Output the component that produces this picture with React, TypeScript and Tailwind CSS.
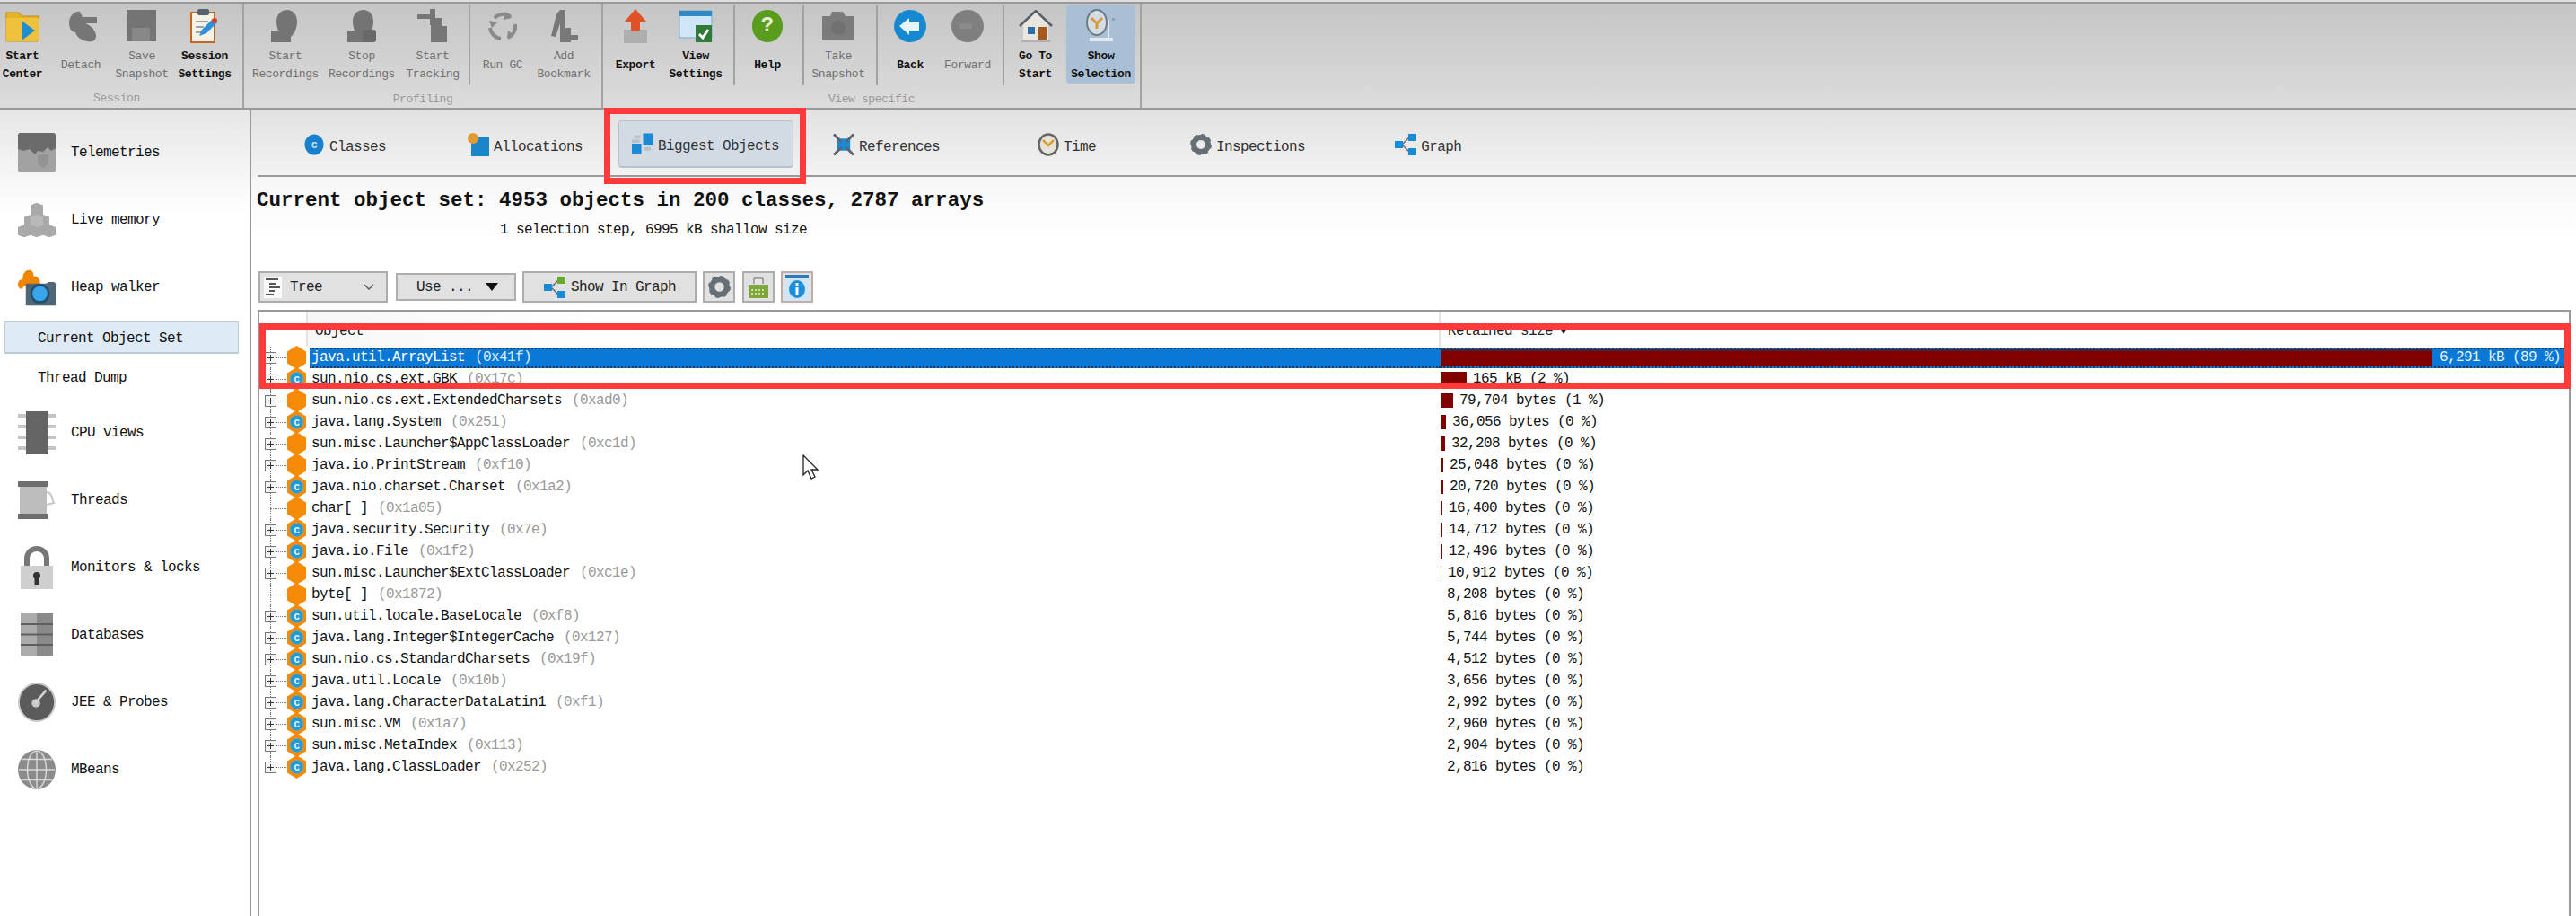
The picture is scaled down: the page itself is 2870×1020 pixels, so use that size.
import { ReactNode } from 'react';

// toolbar icons, 36x36
const StartCenterIcon = () => (
  <svg width="38" height="36" viewBox="0 0 38 36">
    <path d="M1 3h14l3 4h19v28H1z" fill="#e6b422" stroke="#b98d14" />
    <path d="M1 9h36v26H1z" fill="#efc13c" />
    <path d="M18 12l15 11-15 11z" fill="#1d8fd0" />
  </svg>
);
const DetachIcon = () => (
  <svg width="38" height="36" viewBox="0 0 38 36">
    <path d="M6 14C6 6 14 1 18 2l3 6h16v7H24c6 2 12 8 12 14s-5 7-10 6c-6-1-12-5-13-10-4 0-7-4-7-11z" fill="#767676" />
  </svg>
);
const SaveIcon = () => (
  <svg width="36" height="36" viewBox="0 0 36 36">
    <rect x="1" y="0" width="33" height="35" fill="#747474" />
    <rect x="7" y="20" width="20" height="15" fill="#888888" />
  </svg>
);
const SettingsIcon = () => (
  <svg width="32" height="38" viewBox="0 0 32 38">
    <rect x="1" y="4" width="26" height="33" fill="#f4f1e6" stroke="#c8651c" strokeWidth="2" />
    <rect x="8" y="0" width="13" height="7" rx="2" fill="#56636e" />
    <path d="M6 14h14M6 20h9M6 26h7" stroke="#9aa4ad" strokeWidth="2" />
    <path d="M10 30l3-7 12-12 5 4-12 12z" fill="#2f8fd8" />
    <circle cx="27" cy="13" r="3" fill="#d8402c" />
  </svg>
);
const RecordIcon = ({ stop }: { stop?: boolean }) => (
  <svg width="34" height="38" viewBox="0 0 34 38">
    <path d="M7 14C7 5 13 1 19 1s11 5 11 13c0 8-3 13-7 17v6H1V24h8c-1-3-2-6-2-10z" fill="#747474" />
    {stop && <rect x="18" y="23" width="15" height="14" rx="3" fill="#686868" />}
  </svg>
);
const TrackingIcon = () => (
  <svg width="36" height="38" viewBox="0 0 36 38">
    <path d="M1 6h14V0h6v10h8v9h5v18H16V18h-1v-7H1z" fill="#767676" />
  </svg>
);
const GcIcon = () => (
  <svg width="36" height="36" viewBox="0 0 36 36" fill="none" stroke="#8a8a8a" strokeWidth="4">
    <path d="M9 9A13 13 0 0 1 27 8" />
    <path d="M32 16A14 14 0 0 1 24 31" />
    <path d="M16 32A14 14 0 0 1 4 20" />
    <path d="M21 2l7 7-9 2M30 28l-7 4 1-9M3 12l3 8 6-6" fill="#8a8a8a" stroke="none" />
  </svg>
);
const BookmarkIcon = () => (
  <svg width="36" height="38" viewBox="0 0 36 38">
    <path d="M4 30L10 6l4-5h6v20h6v8h8v6h-8v2H14V16l-5 15z" fill="#787878" />
  </svg>
);
const ExportIcon = () => (
  <svg width="30" height="38" viewBox="0 0 30 38">
    <rect x="2" y="23" width="26" height="15" fill="#aeaeae" />
    <path d="M15 0l12 14h-7v10h-10V14H3z" fill="#de5226" />
  </svg>
);
const ViewSettingsIcon = () => (
  <svg width="38" height="36" viewBox="0 0 38 36">
    <rect x="1" y="1" width="36" height="30" fill="#cfe6f6" stroke="#7fa8c8" />
    <rect x="1" y="1" width="36" height="6" fill="#2d8cc8" />
    <rect x="19" y="17" width="18" height="19" fill="#2f7a36" />
    <path d="M23 27l4 4 6-9" stroke="#fff" strokeWidth="3" fill="none" />
  </svg>
);
const HelpIcon = () => (
  <div className="w-[34px] h-[36px] rounded-full bg-[#5a9c1e] flex items-center justify-center text-[#e6f0d0] font-bold text-[24px]">?</div>
);
const CameraIcon = () => (
  <svg width="36" height="32" viewBox="0 0 36 32">
    <path d="M0 5h9l2-5h12l3 5h10v27H0z" fill="#7b7b7b" />
    <circle cx="18" cy="18" r="8" fill="#717171" />
  </svg>
);
const BackIcon = () => (
  <svg width="36" height="36" viewBox="0 0 36 36">
    <ellipse cx="18" cy="18" rx="18" ry="18" fill="#1588d0" />
    <path d="M6 18l11-9v5h11v9H17v5z" fill="#e8f4fb" />
  </svg>
);
const ForwardIcon = () => (
  <svg width="36" height="36" viewBox="0 0 36 36">
    <ellipse cx="18" cy="18" rx="18" ry="18" fill="#7f7f7f" />
    <path d="M9 15h14v6H9z" fill="#8b8b8b" />
  </svg>
);
const HouseIcon = () => (
  <svg width="38" height="36" viewBox="0 0 38 36">
    <path d="M5 15L19 2l14 13v20H5z" fill="#e8e6de" />
    <path d="M1 18L19 1l18 17" fill="none" stroke="#55606a" strokeWidth="2.5" />
    <rect x="22" y="19" width="9" height="16" fill="#a8581c" />
    <rect x="10" y="19" width="8" height="8" fill="#2a6fa8" />
    <rect x="3" y="33" width="32" height="3" fill="#b0b0b0" />
  </svg>
);
const SelectionIcon = () => (
  <svg width="38" height="38" viewBox="0 0 38 38">
    <ellipse cx="14" cy="15" rx="11" ry="14" fill="#d5dde4" stroke="#6f7b84" strokeWidth="2" />
    <path d="M8 10l6 6 6-6M14 16v6" stroke="#d59a3a" strokeWidth="3" fill="none" />
    <path d="M26 12h2v20h-2zM6 32h26v4H6z" fill="#e4e9ee" />
    <rect x="31" y="10" width="3" height="3" fill="#8fa3b5" />
  </svg>
);

type ToolButton = { label: string; icon: ReactNode; w: string; off?: boolean; active?: boolean };

const ToolBtn = ({ b }: { b: ToolButton }) => (
  <div className={`${b.w} h-[87px] flex flex-col items-center shrink-0 rounded-sm ${b.active ? 'bg-[#a9bfd6]' : ''}`}>
    <div className="h-[41px] pt-[4px] flex items-center justify-center">{b.icon}</div>
    <div className={`h-[46px] pt-[6px] flex items-center text-center whitespace-pre leading-[20px] text-[13px] tracking-[-0.4px] ${b.off ? 'text-[#707070]' : 'text-[#111] font-bold'}`}>
      {b.label}
    </div>
  </div>
);

const GroupLabel = ({ text, className = '' }: { text: string; className?: string }) => (
  <div className={`flex-1 flex items-center justify-center pt-[6px] text-[13px] tracking-[-0.4px] text-[#999] ${className}`}>{text}</div>
);

const Sep = ({ className }: { className: string }) => <div className={`w-[2px] h-[89px] bg-[#a2a2a2] shrink-0 ${className}`} />;

const Toolbar = () => (
  <div className="shrink-0">
    <div className="h-[2px] bg-[#dedede]" />
    <div className="h-[120px] flex border-t-2 border-b-2 border-[#999] bg-linear-to-b from-[#c5c5c5] to-[#dcdcdc]">
      <div className="w-[272px] flex flex-col border-r-2 border-[#a2a2a2] pt-[2px]">
        <div className="flex">
          <ToolBtn b={{ label: 'Start\nCenter', icon: <StartCenterIcon />, w: 'w-[50px]' }} />
          <ToolBtn b={{ label: 'Detach', icon: <DetachIcon />, w: 'w-[80px]', off: true }} />
          <ToolBtn b={{ label: 'Save\nSnapshot', icon: <SaveIcon />, w: 'w-[56px]', off: true }} />
          <ToolBtn b={{ label: 'Session\nSettings', icon: <SettingsIcon />, w: 'w-[84px]' }} />
        </div>
        <GroupLabel text="Session" className="pr-[10px]" />
      </div>
      <div className="w-[400px] flex flex-col border-r-2 border-[#a2a2a2] pt-[2px]">
        <div className="flex">
          <ToolBtn b={{ label: 'Start\nRecordings', icon: <RecordIcon />, w: 'w-[92px]', off: true }} />
          <ToolBtn b={{ label: 'Stop\nRecordings', icon: <RecordIcon stop />, w: 'w-[78px]', off: true }} />
          <ToolBtn b={{ label: 'Start\nTracking', icon: <TrackingIcon />, w: 'w-[80px]', off: true }} />
          <Sep className="" />
          <ToolBtn b={{ label: 'Run GC', icon: <GcIcon />, w: 'w-[72px]', off: true }} />
          <ToolBtn b={{ label: 'Add\nBookmark', icon: <BookmarkIcon />, w: 'w-[64px]', off: true }} />
        </div>
        <GroupLabel text="Profiling" />
      </div>
      <div className="w-[600px] flex flex-col border-r-2 border-[#a2a2a2] pt-[2px]">
        <div className="flex">
          <ToolBtn b={{ label: 'Export', icon: <ExportIcon />, w: 'w-[72px]' }} />
          <ToolBtn b={{ label: 'View\nSettings', icon: <ViewSettingsIcon />, w: 'w-[62px]' }} />
          <Sep className="ml-[11px]" />
          <ToolBtn b={{ label: 'Help', icon: <HelpIcon />, w: 'w-[72px]' }} />
          <Sep className="ml-[3px]" />
          <ToolBtn b={{ label: 'Take\nSnapshot', icon: <CameraIcon />, w: 'w-[76px]', off: true }} />
          <Sep className="ml-[4px]" />
          <ToolBtn b={{ label: 'Back', icon: <BackIcon />, w: 'w-[72px]' }} />
          <ToolBtn b={{ label: 'Forward', icon: <ForwardIcon />, w: 'w-[56px]', off: true }} />
          <Sep className="ml-[11px]" />
          <ToolBtn b={{ label: 'Go To\nStart', icon: <HouseIcon />, w: 'w-[69px]' }} />
          <ToolBtn b={{ label: 'Show\nSelection', icon: <SelectionIcon />, w: 'w-[77px]', active: true }} />
        </div>
        <GroupLabel text="View specific" />
      </div>
    </div>
  </div>
);

// sidebar icons
const TelemetriesIcon = () => (
  <svg width="42" height="44" viewBox="0 0 42 44">
    <rect width="42" height="44" rx="3" fill="#a2a2a2" />
    <path d="M0 3a3 3 0 0 1 3-3h36a3 3 0 0 1 3 3v14l-5 3-4-4-5 5-6-1-3 4-6-6-7 2-6-2z" fill="#6b6b6b" />
    <path d="M22 24h12v10l-6 6-6-6z" fill="#939393" />
  </svg>
);
const LiveMemoryIcon = () => (
  <svg width="48" height="44" viewBox="0 0 48 44">
    <path d="M24 0l8 3v12l8 3v10l8 3v10l-8 3-8-3-8 3-8-3-8 3-8-3V31l8-3V18l8-3V3z" fill="#a9a9a9" />
    <path d="M24 15l8 3v10l-8 3-8-3V18z" fill="#b9b9b9" />
  </svg>
);
const HeapWalkerIcon = () => (
  <svg width="48" height="46" viewBox="0 0 48 46">
    <path d="M14 1c4 0 6 3 6 8 5 0 8 3 8 7v5H8l-3 4c-3 0-5-2-5-6s2-6 6-6c0-7 3-12 8-12z" fill="#f18400" />
    <path d="M10 18h26l3-2h6a3 3 0 0 1 3 3v27H10z" fill="#4f6677" />
    <circle cx="28" cy="31" r="11" fill="#38a6ec" stroke="#234f6c" strokeWidth="3" />
  </svg>
);
const CpuIcon = () => (
  <svg width="42" height="48" viewBox="0 0 42 48">
    <path d="M0 5h42M0 17h42M0 29h42M0 41h42" stroke="#c4c4c4" strokeWidth="4" />
    <rect x="9" y="0" width="24" height="48" fill="#646464" />
  </svg>
);
const ThreadsIcon = () => (
  <svg width="42" height="42" viewBox="0 0 42 42">
    <rect x="2" y="6" width="30" height="30" fill="#bdbdbd" />
    <path d="M32 12c6 0 6 8 8 12l-8 2" fill="none" stroke="#c8c8c8" strokeWidth="2" />
    <rect x="0" y="0" width="33" height="6" fill="#6e6e6e" />
    <rect x="0" y="36" width="33" height="6" fill="#6e6e6e" />
  </svg>
);
const LockIcon = () => (
  <svg width="36" height="48" viewBox="0 0 36 48">
    <path d="M7 24V14a11 11 0 0 1 22 0v10" fill="none" stroke="#777" strokeWidth="6" />
    <rect y="22" width="36" height="26" fill="#cfcfcf" />
    <circle cx="18" cy="33" r="4" fill="#333" />
    <rect x="15.5" y="33" width="5" height="10" fill="#333" />
  </svg>
);
const DatabaseIcon = () => (
  <svg width="36" height="47" viewBox="0 0 36 47">
    <rect width="18" height="47" fill="#ababab" />
    <rect x="18" width="18" height="47" fill="#8a8a8a" />
    <path d="M0 12h36M0 23.500h36M0 35h36" stroke="#5f5f5f" strokeWidth="2" />
  </svg>
);
const GaugeIcon = () => (
  <svg width="44" height="46" viewBox="0 0 44 46">
    <ellipse cx="22" cy="23" rx="21" ry="22" fill="#5b5b5b" stroke="#c8c8c8" strokeWidth="2" />
    <circle cx="21" cy="24" r="5" fill="#c8c8c8" />
    <path d="M20 24L33 9" stroke="#d6d6d6" strokeWidth="2.500" />
  </svg>
);
const GlobeIcon = () => (
  <svg width="44" height="46" viewBox="0 0 44 46" fill="none" stroke="#d8d8d8" strokeWidth="1.500">
    <ellipse cx="22" cy="23" rx="22" ry="23" fill="#8b8b8b" stroke="none" />
    <ellipse cx="22" cy="23" rx="11" ry="22" />
    <path d="M22 1v44M1 23h42M4 11h36M4 35h36" />
  </svg>
);

const NavItem = ({ icon, label, className = '' }: { icon: ReactNode; label: string; className?: string }) => (
  <div className={`h-[75px] flex items-center ${className}`}>
    <div className="w-[42px] ml-[20px] flex justify-center shrink-0">{icon}</div>
    <span className="ml-[17px]">{label}</span>
  </div>
);

const Sidebar = () => (
  <div className="w-[280px] shrink-0 border-r-2 border-[#999] pt-[10px] bg-linear-to-b from-[#e6e6e6] to-white to-[13%] text-[16px] tracking-[-0.6px] text-[#111]">
    <NavItem icon={<TelemetriesIcon />} label="Telemetries" />
    <NavItem icon={<LiveMemoryIcon />} label="Live memory" />
    <NavItem icon={<HeapWalkerIcon />} label="Heap walker" />
    <div className="mt-[1px] ml-[5px] w-[261px] h-[36px] pl-[36px] pt-[2px] flex items-center bg-[#deeaf6] border border-[#bccbd8] border-b-2">Current Object Set</div>
    <div className="mt-[9px] h-[36px] pl-[42px] flex items-center">Thread Dump</div>
    <NavItem icon={<CpuIcon />} label="CPU views" className="mt-[5px]" />
    <NavItem icon={<ThreadsIcon />} label="Threads" />
    <NavItem icon={<LockIcon />} label="Monitors & locks" />
    <NavItem icon={<DatabaseIcon />} label="Databases" />
    <NavItem icon={<GaugeIcon />} label="JEE & Probes" />
    <NavItem icon={<GlobeIcon />} label="MBeans" />
  </div>
);

// view tabs
const ClassesTabIcon = () => (
  <svg width="24" height="24" viewBox="0 0 24 24">
    <ellipse cx="12" cy="12" rx="10.500" ry="11.500" fill="#1a80cc" />
    <text x="12" y="16" textAnchor="middle" fontSize="11" fontWeight="bold" fill="#cde6f7">C</text>
  </svg>
);
const AllocationsTabIcon = () => (
  <svg width="24" height="26" viewBox="0 0 24 26">
    <rect x="4" y="4" width="20" height="22" fill="#1a85c8" />
    <circle cx="6" cy="6" r="6" fill="#e49a30" />
  </svg>
);
const BiggestTabIcon = () => (
  <svg width="25" height="24" viewBox="0 0 25 24">
    <rect x="13" y="0" width="11" height="14" fill="#1a8ad4" />
    <rect x="0" y="12" width="11" height="12" fill="#1a8ad4" />
    <path d="M3 2h7v4H3zM0 7h9v4H0zM14 16h8v4h-8z" fill="#b9c2ca" />
  </svg>
);
const ReferencesTabIcon = () => (
  <svg width="25" height="26" viewBox="0 0 25 26">
    <rect x="5" y="6" width="15" height="14" fill="#1a8ad4" />
    <path d="M1 1l9 9M24 1l-9 9M1 25l9-9M24 25l-9-9" stroke="#5c6670" strokeWidth="3" />
  </svg>
);
const ClockTabIcon = () => (
  <svg width="24" height="26" viewBox="0 0 24 26">
    <ellipse cx="12" cy="13" rx="10.500" ry="11.500" fill="#e7e3d8" stroke="#666" strokeWidth="2.500" />
    <path d="M6 8l6 6 6-6" stroke="#dc9c34" strokeWidth="2.500" fill="none" />
  </svg>
);
const GearIcon = ({ size = 24 }: { size?: number }) => (
  <svg width={size} height={size} viewBox="0 0 24 24">
    <circle cx="12" cy="12" r="8" fill="none" stroke="#666f76" strokeWidth="6" />
    <circle cx="12" cy="12" r="10" fill="none" stroke="#666f76" strokeWidth="4" strokeDasharray="4 3.850" />
  </svg>
);
const GraphIcon = ({ square }: { square?: boolean }) => (
  <svg width="24" height="24" viewBox="0 0 24 24">
    <path d="M8 12L16 4M8 12l8 8" stroke="#667" strokeWidth="1.500" />
    <rect x="0" y="8" width="9" height="8" fill="#178bd6" />
    <rect x="15" y="0" width="9" height="8" fill={square ? '#6aa82a' : '#178bd6'} />
    <rect x="15" y="16" width="9" height="8" fill="#178bd6" />
  </svg>
);

const Tab = ({ icon, label, className }: { icon: ReactNode; label: string; className: string }) => (
  <div className={`flex items-center gap-[5px] ${className}`}>
    <div className="w-[24px] flex justify-center">{icon}</div>
    <span className="pt-[6px]">{label}</span>
  </div>
);

const Tabs = () => (
  <div className="bg-linear-to-b from-[#e1e1e1] to-[#f3f3f3] shrink-0">
    <div className="ml-[7px] h-[75px] border-b-2 border-[#999] pl-[51px] pt-[12px] text-[16px] tracking-[-0.6px] text-[#333]">
      <div className="flex h-[53px] items-center">
        <Tab icon={<ClassesTabIcon />} label="Classes" className="" />
        <Tab icon={<AllocationsTabIcon />} label="Allocations" className="ml-[91px]" />
        <div className="relative ml-[40px] w-[195px] h-[53px] pl-[14px] flex items-center bg-[#d2dbe4] border border-[#b8c2cb] border-b-2 rounded-sm">
          <Tab icon={<BiggestTabIcon />} label="Biggest Objects" className="" />
          <div className="absolute left-[-17px] right-[-15px] top-[-15px] bottom-[-20px] border-[7px] border-[#ff3a3a]" />
        </div>
        <Tab icon={<ReferencesTabIcon />} label="References" className="ml-[44px]" />
        <Tab icon={<ClockTabIcon />} label="Time" className="ml-[109px]" />
        <Tab icon={<GearIcon />} label="Inspections" className="ml-[105px]" />
        <Tab icon={<GraphIcon />} label="Graph" className="ml-[100px]" />
      </div>
    </div>
  </div>
);

const ControlBtn = ({ children, className }: { children: ReactNode; className: string }) => (
  <div className={`flex items-center bg-[#e1e1e1] border-2 border-[#adadad] text-[16px] tracking-[-0.6px] text-[#222] ${className}`}>{children}</div>
);

const Controls = () => (
  <div className="ml-[8px] mt-[37px] flex items-center h-[35px]">
    <ControlBtn className="w-[144px] h-[35px]">
      <svg width="20" height="24" viewBox="0 0 20 24" className="ml-[4px]">
        <rect width="20" height="24" fill="#fafafa" />
        <path d="M2 3h14M6 8h8M6 12h12M6 16h6M2 20h9" stroke="#555" strokeWidth="1.800" />
      </svg>
      <span className="ml-[9px]">Tree</span>
      <svg width="12" height="8" viewBox="0 0 12 8" className="ml-[46px]">
        <path d="M1 1l5 5 5-5" fill="none" stroke="#555" strokeWidth="1.300" />
      </svg>
    </ControlBtn>
    <ControlBtn className="ml-[9px] w-[134px] h-[31px]">
      <span className="ml-[21px]">Use ...</span>
      <svg width="14" height="9" viewBox="0 0 14 9" className="ml-[14px]">
        <path d="M0 0h14L7 9z" fill="#111" />
      </svg>
    </ControlBtn>
    <ControlBtn className="ml-[7px] w-[194px] h-[35px]">
      <span className="ml-[22px]"><GraphIcon square /></span>
      <span className="ml-[6px]">Show In Graph</span>
    </ControlBtn>
    <ControlBtn className="ml-[7px] w-[36px] h-[35px] justify-center"><GearIcon size={25} /></ControlBtn>
    <ControlBtn className="ml-[8px] w-[36px] h-[35px] justify-center">
      <svg width="24" height="25" viewBox="0 0 24 25">
        <rect x="1" y="10" width="22" height="15" fill="#7fa63c" />
        <path d="M7 9V3h10v6" fill="#e8e8e8" stroke="#666" />
        <path d="M4 16h16M4 20h16" stroke="#cfe0a0" strokeWidth="2" strokeDasharray="2 2" />
      </svg>
    </ControlBtn>
    <ControlBtn className="ml-[7px] w-[36px] h-[35px] justify-center border-[#c0adad]">
      <svg width="26" height="28" viewBox="0 0 26 28">
        <rect width="26" height="28" fill="#cfe6f6" />
        <rect width="26" height="4" fill="#2d7cb8" />
        <ellipse cx="13" cy="16" rx="9" ry="10" fill="#1b8fdc" />
        <rect x="11.500" y="14" width="3" height="8" fill="#fff" />
        <rect x="11.500" y="9" width="3" height="3" fill="#fff" />
      </svg>
    </ControlBtn>
  </div>
);

type Row = { name: string; addr: string; kind: 'o' | 'c'; leaf?: boolean; size: string; bar: number };

const rows: Row[] = [
  { name: 'java.util.ArrayList', addr: '0x41f', kind: 'o', size: '6,291 kB (89 %)', bar: 1105 },
  { name: 'sun.nio.cs.ext.GBK', addr: '0x17c', kind: 'c', size: '165 kB (2 %)', bar: 29 },
  { name: 'sun.nio.cs.ext.ExtendedCharsets', addr: '0xad0', kind: 'o', size: '79,704 bytes (1 %)', bar: 14 },
  { name: 'java.lang.System', addr: '0x251', kind: 'c', size: '36,056 bytes (0 %)', bar: 6 },
  { name: 'sun.misc.Launcher$AppClassLoader', addr: '0xc1d', kind: 'o', size: '32,208 bytes (0 %)', bar: 5 },
  { name: 'java.io.PrintStream', addr: '0xf10', kind: 'o', size: '25,048 bytes (0 %)', bar: 3 },
  { name: 'java.nio.charset.Charset', addr: '0x1a2', kind: 'c', size: '20,720 bytes (0 %)', bar: 3 },
  { name: 'char[ ]', addr: '0x1a05', kind: 'o', leaf: true, size: '16,400 bytes (0 %)', bar: 2 },
  { name: 'java.security.Security', addr: '0x7e', kind: 'c', size: '14,712 bytes (0 %)', bar: 2 },
  { name: 'java.io.File', addr: '0x1f2', kind: 'c', size: '12,496 bytes (0 %)', bar: 2 },
  { name: 'sun.misc.Launcher$ExtClassLoader', addr: '0xc1e', kind: 'o', size: '10,912 bytes (0 %)', bar: 1 },
  { name: 'byte[ ]', addr: '0x1872', kind: 'o', leaf: true, size: '8,208 bytes (0 %)', bar: 0 },
  { name: 'sun.util.locale.BaseLocale', addr: '0xf8', kind: 'c', size: '5,816 bytes (0 %)', bar: 0 },
  { name: 'java.lang.Integer$IntegerCache', addr: '0x127', kind: 'c', size: '5,744 bytes (0 %)', bar: 0 },
  { name: 'sun.nio.cs.StandardCharsets', addr: '0x19f', kind: 'c', size: '4,512 bytes (0 %)', bar: 0 },
  { name: 'java.util.Locale', addr: '0x10b', kind: 'c', size: '3,656 bytes (0 %)', bar: 0 },
  { name: 'java.lang.CharacterDataLatin1', addr: '0xf1', kind: 'c', size: '2,992 bytes (0 %)', bar: 0 },
  { name: 'sun.misc.VM', addr: '0x1a7', kind: 'c', size: '2,960 bytes (0 %)', bar: 0 },
  { name: 'sun.misc.MetaIndex', addr: '0x113', kind: 'c', size: '2,904 bytes (0 %)', bar: 0 },
  { name: 'java.lang.ClassLoader', addr: '0x252', kind: 'c', size: '2,816 bytes (0 %)', bar: 0 },
];

const HexIcon = ({ kind }: { kind: 'o' | 'c' }) => (
  <svg width="21" height="26" viewBox="0 0 21 26" className="shrink-0">
    <path d="M10.500 0L21 6.500v13L10.500 26 0 19.500v-13z" fill="#f58a07" />
    {kind === 'c' && <circle cx="10.500" cy="13" r="7.500" fill="#1f9ad6" stroke="#7fa3a8" />}
    {kind === 'c' && <text x="10.500" y="17" textAnchor="middle" fontSize="11" fontWeight="bold" fill="#eaf7fd">C</text>}
  </svg>
);

const TreeGutter = ({ leaf, last }: { leaf?: boolean; last?: boolean }) => (
  <div className="relative w-[24px] h-full shrink-0 ml-[6px]">
    <div className={`absolute left-[6px] top-0 border-l border-dotted border-[#777] ${last ? 'h-[12px]' : 'h-[24px]'}`} />
    <div className="absolute left-[6px] right-0 top-[12px] border-t border-dotted border-[#777]" />
    {!leaf && (
      <div className="absolute left-0 top-[6px] w-[13px] h-[13px] bg-[#f4f4f4] border border-[#777] flex items-center justify-center">
        <div className="w-[7px] h-[1px] bg-[#333]" />
        <div className="absolute w-[1px] h-[7px] bg-[#333]" />
      </div>
    )}
  </div>
);

const TreeRow = ({ row, selected, last }: { row: Row; selected: boolean; last: boolean }) => (
  <div className="h-[24px] flex items-center text-[16px] tracking-[-0.6px] whitespace-pre">
    <div className="w-[1316px] h-full flex items-center shrink-0">
      <TreeGutter leaf={row.leaf} last={last} />
      <div className="ml-[1px] shrink-0"><HexIcon kind={row.kind} /></div>
      {selected ? (
        <div className="ml-[4px] flex-1 h-[23px] flex items-center pl-[2px] bg-[#0a78d7] text-white border-y-2 border-dotted border-[#233a55]">
          {row.name}<span className="ml-[11px] text-[#dcecfa]">({row.addr})</span>
        </div>
      ) : (
        <div className="ml-[6px] flex items-center text-[#111]">
          {row.name}<span className="ml-[11px] text-[#999]">({row.addr})</span>
        </div>
      )}
    </div>
    {selected ? (
      <div className="flex-1 h-[23px] mr-[5px] flex items-center bg-[#0a78d7] text-white border-y-2 border-dotted border-[#233a55]">
        <div className="h-full bg-[#800000] border-t-2 border-[#4a2238]" style={{ width: row.bar }} />
        <span className="ml-[8px] text-[#e6f2fc]">{row.size}</span>
      </div>
    ) : (
      <div className="flex-1 flex items-center text-[#111]">
        <div className="h-[16px] bg-[#800000]" style={{ width: row.bar }} />
        <span className="ml-[7px]">{row.size}</span>
      </div>
    )}
  </div>
);

const ObjectTable = () => (
  <div className="relative flex-1 ml-[7px] mr-[6px] mt-[8px] border-t-2 border-x-2 border-[#999] bg-white">
    <div className="h-[39px] flex text-[16px] tracking-[-0.6px] text-[#222]">
      <div className="w-[54px] border-r-2 border-[#e4e4e4]" />
      <div className="w-[1260px] pl-[8px] pt-[13px] leading-[18px] bg-linear-to-r from-[#f7f7f7] to-white to-[30%]">Object</div>
      <div className="flex-1 border-l-2 border-[#e4e4e4] pl-[8px] pt-[13px] leading-[18px] flex">
        Retained size
        <svg width="10" height="7" viewBox="0 0 10 7" className="ml-[7px] mt-[5px]"><path d="M0 0h10L5 7z" fill="#222" /></svg>
      </div>
    </div>
    {rows.map((r, i) => (
      <TreeRow key={r.name} row={r} selected={i === 0} last={i === rows.length - 1} />
    ))}
    <div className="absolute left-0 right-[-2px] top-[13px] h-[73px] border-[7px] border-[#ff3a3a]" />
  </div>
);

const Cursor = () => (
  <svg width="20" height="29" viewBox="0 0 20 29" className="absolute left-[894px] top-[506px]">
    <path d="M1 1v22l5-5 4 9 4-2-4-8h7z" fill="#fff" stroke="#222" strokeWidth="1.300" />
  </svg>
);

export default function App() {
  return (
    <div className="relative h-screen w-full overflow-hidden flex flex-col bg-white font-['Liberation_Mono',monospace]">
      <Toolbar />
      <div className="flex flex-1 min-h-0">
        <Sidebar />
        <div className="flex-1 min-w-0 flex flex-col">
          <Tabs />
          <div className="h-[68px] shrink-0 pl-[6px] pt-[11px] bg-linear-to-b from-[#f6f6f6] to-white text-[#111]">
            <div className="font-bold text-[22.500px] leading-[30px] whitespace-pre">Current object set: 4953 objects in 200 classes, 2787 arrays</div>
            <div className="ml-[271px] mt-[8px] text-[16px] tracking-[-0.6px] leading-[20px]">1 selection step, 6995 kB shallow size</div>
          </div>
          <Controls />
          <ObjectTable />
        </div>
      </div>
      <Cursor />
    </div>
  );
}
